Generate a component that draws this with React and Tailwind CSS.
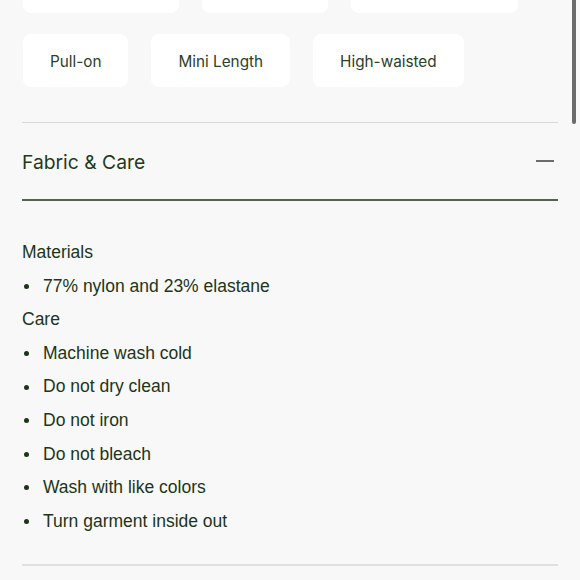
import React from 'react';

const topChips = [
  { label: 'Stretch', w: 'w-[156px]' },
  { label: 'Lined', w: 'w-[126px]' },
  { label: 'Bodycon Fit', w: 'w-[167px]' },
];

const chips = ['Pull-on', 'Mini Length', 'High-waisted'];

const sections = [
  { title: 'Materials', items: ['77% nylon and 23% elastane'] },
  {
    title: 'Care',
    items: [
      'Machine wash cold',
      'Do not dry clean',
      'Do not iron',
      'Do not bleach',
      'Wash with like colors',
      'Turn garment inside out',
    ],
  },
];

const App = () => {
  return (
    <div className="relative w-[580px] h-[580px] overflow-hidden bg-[#f8f8f8] font-['Inter',sans-serif]">
      {/* Scrollbar thumb */}
      <div className="absolute right-[4px] top-0 w-[4px] h-[124px] rounded-b-full bg-[#6b6b6b]" />

      {/* Feature chips */}
      <div className="px-[23px] mt-[-40px] pb-[35px]">
        <div className="flex gap-[23px] mb-[21px]">
          {topChips.map((c) => (
            <div
              key={c.label}
              className={`${c.w} h-[53px] rounded-[8px] bg-white`}
            />
          ))}
        </div>
        <div className="flex gap-[23px]">
          {chips.map((c) => (
            <div
              key={c}
              className="h-[53px] px-[27px] pt-[3px] flex items-center rounded-[8px] bg-white text-[15.3px] text-[#2d4029]"
            >
              {c}
            </div>
          ))}
        </div>
      </div>

      {/* Accordion */}
      <div className="mx-[22px] w-[536px] border-t border-[#d9d9d9]">
        <div className="h-[76px] flex items-center justify-between">
          <h2 className="text-[19.3px] text-[#1f3a1b] pt-[3px]">Fabric &amp; Care</h2>
          <span className="block w-[18px] h-[2px] bg-[#6b6b6b] mr-[4px]" />
        </div>
        <div className="h-[2px] bg-[#56634f]" />

        <div className="pt-[35px] pb-[26px] font-['Liberation_Sans',Arial,sans-serif] text-[17.5px] leading-[33.6px] text-[#1d3519]">
          {sections.map((s) => (
            <div key={s.title}>
              <p>{s.title}</p>
              <ul>
                {s.items.map((item) => (
                  <li key={item} className="flex items-center">
                    <span className="w-[5px] h-[5px] rounded-full bg-[#1d3519] ml-[2px] mr-[14px]" />
                    {item}
                  </li>
                ))}
              </ul>
            </div>
          ))}
        </div>
        <div className="h-[2px] bg-[#e0e0e0]" />
      </div>
    </div>
  );
};

export default App;
